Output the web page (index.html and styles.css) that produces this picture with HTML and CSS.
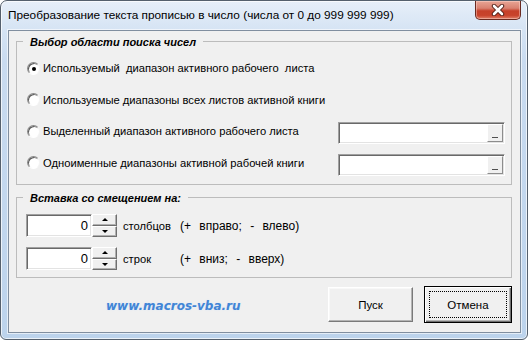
FILE: index.html
```html
<!DOCTYPE html>
<html lang="ru">
<head>
  <meta charset="UTF-8" />
  <title>Преобразование текста прописью в число</title>
  <link rel="stylesheet" href="styles.css">
</head>
<body>
  <div class="window">
    <div class="titlebar">
      <span class="title">Преобразование текста прописью в число (числа от 0 до 999 999 999)</span>
      <span class="close-btn">
        <svg width="14" height="12" viewBox="0 0 14 12">
          <path d="M3 2 L11 10 M11 2 L3 10" stroke="#4a1a12" stroke-width="4.4" stroke-linecap="round" />
          <path d="M3 2 L11 10 M11 2 L3 10" stroke="#ffffff" stroke-width="2.6" stroke-linecap="round" />
        </svg>
      </span>
    </div>

    <div class="client">
      <!-- область поиска -->
      <div class="frame frame-area">
        <div class="legend">Выбор области поиска чисел</div>
        <div class="option-list">
          <div class="option">
            <span class="radio checked"></span>
            <span class="option-label">Используемый  диапазон активного рабочего  листа</span>
          </div>
          <div class="option">
            <span class="radio"></span>
            <span class="option-label">Используемые диапазоны всех листов активной книги</span>
          </div>
          <div class="option">
            <span class="radio"></span>
            <span class="option-label">Выделенный диапазон активного рабочего листа</span>
            <div class="ref-edit"><span class="ref-btn"></span></div>
          </div>
          <div class="option">
            <span class="radio"></span>
            <span class="option-label">Одноименные диапазоны активной рабочей книги</span>
            <div class="ref-edit"><span class="ref-btn"></span></div>
          </div>
        </div>
      </div>

      <!-- смещение -->
      <div class="frame frame-offset">
        <div class="legend">Вставка со смещением на:</div>
        <div class="spin-row">
          <div class="spin-input">0</div>
          <div class="spin-buttons">
            <span class="spin-btn spin-up"></span>
            <span class="spin-btn spin-down"></span>
          </div>
          <span class="spin-label">столбцов</span>
          <span class="spin-hint">(+ вправо; - влево)</span>
        </div>
        <div class="spin-row">
          <div class="spin-input">0</div>
          <div class="spin-buttons">
            <span class="spin-btn spin-up"></span>
            <span class="spin-btn spin-down"></span>
          </div>
          <span class="spin-label">строк</span>
          <span class="spin-hint">(+ вниз; - вверх)</span>
        </div>
      </div>

      <div class="footer">
        <span class="site-link">www.macros-vba.ru</span>
        <button class="btn btn-run">Пуск</button>
        <button class="btn btn-default"><span class="focus-rect">Отмена</span></button>
      </div>
    </div>
  </div>
</body>
</html>
```

FILE: styles.css
```css
body {
  margin: 0;
  background: #ffffff;
  font-family: 'Liberation Sans', Arial, sans-serif;
  font-size: 11.2px;
  color: #000;
}

.window {
  width: 528px;
  height: 340px;
  box-sizing: border-box;
  border: 1px solid #55606d;
  border-radius: 7px 7px 6px 6px;
  background: linear-gradient(180deg, #e7eff9 0, #d6e4f4 28px, #c9dbf0 60px, #bcd3ec 100%);
  box-shadow: inset 0 0 0 1px rgba(255, 255, 255, 0.7);
  display: flex;
  flex-direction: column;
  overflow: hidden;
}

.titlebar {
  height: 29px;
  display: flex;
  align-items: flex-start;
  flex-shrink: 0;
}

.title {
  padding-left: 7px;
  line-height: 16px;
  margin-top: 6px;
  font-size: 11.8px;
  white-space: nowrap;
}

.close-btn {
  margin-left: auto;
  margin-right: 6px;
  width: 46px;
  height: 19px;
  box-sizing: border-box;
  border: 1px solid #6a2a20;
  border-top: none;
  border-radius: 0 0 5px 5px;
  background: linear-gradient(180deg, #e8a595 0, #d98170 40%, #c6402a 55%, #c8432c 80%, #e0806a 100%);
  box-shadow: inset 0 0 0 1px rgba(255, 220, 210, 0.45);
  display: flex;
  justify-content: center;
  align-items: center;
}

.client {
  margin: 0 6px 0 7px;
  height: 303px;
  box-sizing: border-box;
  border: 1px solid #808e9f;
  background: #f0f0f0;
  box-shadow: 0 0 0 1px rgba(255, 255, 255, 0.6);
  display: flex;
  flex-direction: column;
}

.frame {
  margin: 0 8px 0 7px;
  box-sizing: border-box;
  border: 1px solid #bcbcbc;
  flex-shrink: 0;
}

.frame-area {
  margin-top: 10px;
  height: 144px;
}

.frame-offset {
  margin-top: 12px;
  height: 81px;
}

.legend {
  width: max-content;
  margin: -8px 0 0 6px;
  padding: 0 7px;
  line-height: 16px;
  background: #f0f0f0;
  font-size: 11px;
  font-weight: bold;
  font-style: italic;
}

.option-list {
  margin-top: 2px;
  display: grid;
  grid-template-rows: 32px 31px 32px 31px;
}

.option {
  display: flex;
  align-items: center;
  padding-left: 10px;
}

.radio {
  width: 13px;
  height: 13px;
  box-sizing: border-box;
  border-radius: 50%;
  border: 1px solid;
  border-color: #8a8a8a #f4f4f4 #ffffff #8a8a8a;
  background: #fff;
  box-shadow: inset 1px 1px 0 #5a5a5a;
  margin-right: 3px;
  flex-shrink: 0;
  display: flex;
  justify-content: center;
  align-items: center;
}

.radio.checked::after {
  content: "";
  width: 4px;
  height: 4px;
  border-radius: 50%;
  background: #000;
  margin: 1px 0 0 1px;
}

.option-label {
  white-space: pre;
  flex: 1;
}

.ref-edit {
  width: 167px;
  height: 22px;
  margin: 4px 6px 0 0;
  box-sizing: border-box;
  border: 1px solid;
  border-color: #a0a0a0 #ffffff #ffffff #a0a0a0;
  box-shadow: inset 1px 1px 0 #696969, inset -1px -1px 0 #e3e3e3;
  background: #fff;
  display: flex;
  justify-content: flex-end;
  padding: 1px 1px 1px 0;
}

.ref-btn {
  width: 16px;
  box-sizing: border-box;
  border: 1px solid;
  border-color: #ffffff #8d8d8d #8d8d8d #ffffff;
  background: #f0f0f0;
  display: flex;
  justify-content: center;
  align-items: flex-end;
  padding-bottom: 3px;
}

.ref-btn::after {
  content: "";
  width: 6px;
  height: 1px;
  background: #505050;
}

.spin-row {
  display: flex;
  align-items: center;
  height: 23px;
  padding-left: 9px;
}

.legend + .spin-row {
  margin-top: 8px;
}

.spin-row + .spin-row {
  margin-top: 10px;
}

.spin-input {
  width: 66px;
  height: 23px;
  box-sizing: border-box;
  border: 1px solid;
  border-color: #a0a0a0 #ffffff #ffffff #a0a0a0;
  box-shadow: inset 1px 1px 0 #696969, inset -1px -1px 0 #e3e3e3;
  background: #fff;
  text-align: right;
  padding-right: 3px;
  font-size: 13px;
  line-height: 21px;
}

.spin-buttons {
  width: 25px;
  height: 23px;
  display: flex;
  flex-direction: column;
}

.spin-btn {
  flex: 1;
  box-sizing: border-box;
  border: 1px solid;
  border-color: #ffffff #6f6f6f #6f6f6f #ffffff;
  box-shadow: inset -1px -1px 0 #b0b0b0;
  background: #f0f0f0;
  display: flex;
  justify-content: center;
  align-items: center;
}

.spin-up::after,
.spin-down::after {
  content: "";
  width: 0;
  height: 0;
  border-left: 3px solid transparent;
  border-right: 3px solid transparent;
}

.spin-up::after {
  border-bottom: 3px solid #000;
}

.spin-down::after {
  border-top: 3px solid #000;
}

.spin-label {
  margin-left: 6px;
  width: 57px;
}

.spin-hint {
  white-space: pre;
  font-size: 12px;
  word-spacing: 5px;
}

.footer {
  margin-top: 8px;
  height: 37px;
  display: flex;
  align-items: center;
  padding: 0 8px 0 97px;
}

.site-link {
  margin-right: auto;
  margin-top: 2px;
  color: #4185d6;
  font-family: 'DejaVu Sans', sans-serif;
  font-weight: bold;
  font-style: italic;
  font-size: 12px;
  text-shadow: 0 0 2px #d8e6f7;
}

.btn {
  height: 37px;
  box-sizing: border-box;
  font-family: inherit;
  font-size: 11.5px;
  color: #000;
  background: #f0f0f0;
  padding: 0;
  cursor: pointer;
}

.btn-run {
  width: 85px;
  height: 35px;
  border: 1px solid;
  border-color: #ffffff #7a7a7a #7a7a7a #ffffff;
  box-shadow: inset -1px -1px 0 #b4b4b4, inset 1px 1px 0 #f8f8f8;
}

.btn-default {
  width: 88px;
  margin-left: 11px;
  border: 1px solid #000;
  box-shadow: inset 1px 1px 0 #ffffff, inset -1px -1px 0 #6f6f6f, inset -2px -2px 0 #b4b4b4;
  display: flex;
  padding: 4px;
}

.focus-rect {
  flex: 1;
  border: 1px dotted #000;
  display: flex;
  justify-content: center;
  align-items: center;
}
```
